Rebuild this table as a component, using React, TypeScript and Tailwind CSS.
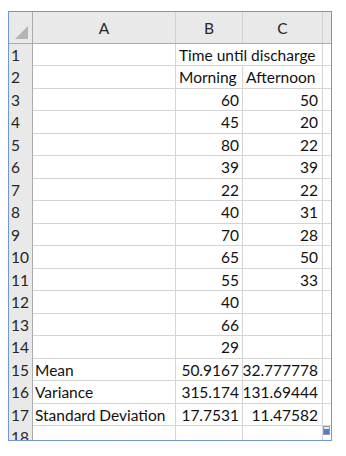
import React from 'react';

const rows: [string, string, string][] = [
  ['', 'Time until discharge', ''],
  ['', 'Morning', 'Afternoon'],
  ['', '60', '50'],
  ['', '45', '20'],
  ['', '80', '22'],
  ['', '39', '39'],
  ['', '22', '22'],
  ['', '40', '31'],
  ['', '70', '28'],
  ['', '65', '50'],
  ['', '55', '33'],
  ['', '40', ''],
  ['', '66', ''],
  ['', '29', ''],
  ['Mean', '50.9167', '32.777778'],
  ['Variance', '315.174', '131.69444'],
  ['Standard Deviation', '17.7531', '11.47582'],
  ['', '', ''],
];

const cols = 'grid grid-cols-[24px_143px_67px_80px_1fr]';
const cell = 'border-r border-[#d4d4d4] flex items-end pb-[1px] whitespace-nowrap';

const App = () => {
  return (
    <div
      className="w-[346px] h-[456px] bg-white pt-[11px] pl-[8px]"
      style={{ fontFamily: 'Lato, "Liberation Sans", sans-serif' }}
    >
      <div className="w-[324px] h-[430px] border border-[#6f97d9] overflow-hidden relative text-[15.5px] text-[#111]">
        {/* column headers */}
        <div className={`${cols} h-[32px] bg-[#e9e9e9] border-b border-[#ababab]`}>
          <div className="border-r border-[#ababab] flex items-end justify-end pr-[4px] pb-[4px]">
            <div className="w-0 h-0 border-l-[13px] border-l-transparent border-b-[13px] border-b-[#b4b4b4]" />
          </div>
          {['A', 'B', 'C'].map(c => (
            <div
              key={c}
              className="border-r border-[#d0d0d0] flex items-end justify-center pb-[3px] text-[#262626]"
            >
              {c}
            </div>
          ))}
          <div />
        </div>
        {rows.map((r, i) => (
          <div
            key={i}
            className={`${cols} ${i % 2 == 0 ? 'h-[22px]' : 'h-[23px]'} border-b border-[#d4d4d4]`}
          >
            <div className="bg-[#e9e9e9] border-r border-[#ababab] flex items-end pl-[2px] pb-[1px] text-[#262626] border-b border-b-[#cfcfcf] -mb-px">
              {i + 1}
            </div>
            <div className={`${cell} pl-[2px]`}>{r[0]}</div>
            {i == 0 ? (
              <div className={`${cell} col-span-2 pl-[3px]`}>{r[1]}</div>
            ) : i == 1 ? (
              <>
                <div className={`${cell} pl-[3px]`}>{r[1]}</div>
                <div className={`${cell} pl-[3px]`}>{r[2]}</div>
              </>
            ) : (
              <>
                <div className={`${cell} justify-end pr-[3px]`}>{r[1]}</div>
                <div className={`${cell} justify-end pr-[4px]`}>{r[2]}</div>
              </>
            )}
            <div />
          </div>
        ))}
        <div className="absolute right-[1px] bottom-[5px] w-[7px] h-[9px] border border-[#9a9a9a] bg-[#e9e9e9] flex items-end">
          <div className="w-full h-[5px] bg-[#4a7fd6]" />
        </div>
      </div>
    </div>
  );
};

export default App;
